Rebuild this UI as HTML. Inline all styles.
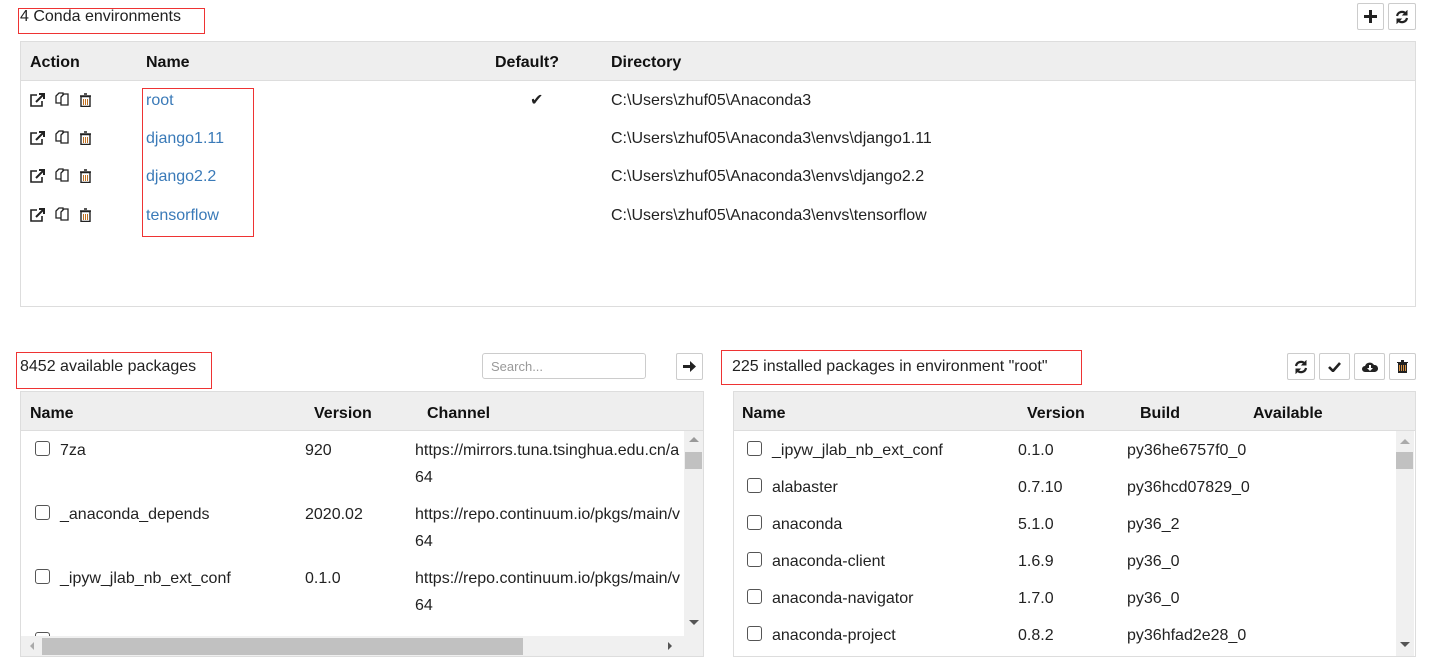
<!DOCTYPE html><html><head><style>
body{margin:0;width:1445px;height:664px;background:#fff;font-family:"Liberation Sans",Arial,sans-serif;font-size:16px;color:#222;position:relative;overflow:hidden}
.a{position:absolute;white-space:nowrap}
.t{margin-top:2px}
.red{position:absolute;border:1px solid #e33}
.box{position:absolute;border:1px solid #ddd;box-sizing:border-box;background:#fff}
.hd{position:absolute;left:0;right:0;top:0;height:38px;background:#eee;border-bottom:1px solid #ddd}
b{font-size:16px;color:#111}
.btn{position:absolute;border:1px solid #ccc;border-radius:2px;box-sizing:border-box;background:#fff;height:27px;display:flex;align-items:center;justify-content:center}
.cb{position:absolute;width:15px;height:15px;border:1px solid #555;border-radius:3px;box-sizing:border-box}
.lnk{color:#3a7ab8}
.sb{position:absolute;background:#f0f0f0}
</style></head><body>
<div class="red" style="left:18px;top:8px;width:185px;height:24px"></div>
<div class="a" style="left:20px;top:8px">4 Conda environments</div>
<div class="btn" style="left:1357px;top:3px;width:27px"><svg width="13" height="13"><path d="M5 0h3v5h5v3H8v5H5V8H0V5h5z" fill="#222"/></svg></div>
<div class="btn" style="left:1388px;top:3px;width:28px"><svg width="14" height="14" viewBox="0 0 14 14" fill="none" stroke="#222" stroke-width="2.2"><path d="M2 6a5 5 0 0 1 9-2"/><path d="M12 8a5 5 0 0 1-9 2"/><path d="M12 1v4H8z" fill="#222" stroke-width="1"/><path d="M2 13V9h4z" fill="#222" stroke-width="1"/></svg></div>
<div class="box" style="left:20px;top:41px;width:1396px;height:266px"><div class="hd"></div></div>
<div class="a t" style="left:30px;top:52px"><b>Action</b></div>
<div class="a t" style="left:146px;top:52px"><b>Name</b></div>
<div class="a t" style="left:495px;top:52px"><b>Default?</b></div>
<div class="a t" style="left:611px;top:52px"><b>Directory</b></div>
<div class="red" style="left:142px;top:88px;width:110px;height:147px"></div>
<div id="rows"></div>
<div class="a" style="left:530px;top:90px;font-size:16px">✔</div>

<div class="red" style="left:16px;top:352px;width:194px;height:35px"></div>
<div class="a" style="left:20px;top:358px">8452 available packages</div>
<div class="a" style="left:482px;top:353px;width:164px;height:26px;border:1px solid #ccc;border-radius:3px;box-sizing:border-box;font-size:13px;color:#999;padding:5px 8px">Search...</div>
<div class="btn" style="left:676px;top:353px;width:27px"><svg width="13" height="13"><path d="M0 5h7V1l6 5.5-6 5.5V8H0z" fill="#222"/></svg></div>
<div class="box" style="left:20px;top:391px;width:684px;height:266px"><div class="hd"></div></div>
<div class="a t" style="left:30px;top:403px"><b>Name</b></div>
<div class="a t" style="left:314px;top:403px"><b>Version</b></div>
<div class="a t" style="left:427px;top:403px"><b>Channel</b></div>
<div class="sb" style="left:684px;top:431px;width:19px;height:205px"></div>
<div class="a" style="left:689px;top:437px;width:0;height:0;border:5px solid transparent;border-bottom-color:#999;border-top:0"></div>
<div class="a" style="left:685px;top:452px;width:17px;height:17px;background:#c1c1c1"></div>
<div class="a" style="left:689px;top:620px;width:0;height:0;border:5px solid transparent;border-top-color:#555;border-bottom:0"></div>
<div class="sb" style="left:21px;top:636px;width:682px;height:20px"></div>
<div class="a" style="left:42px;top:638px;width:481px;height:17px;background:#c1c1c1"></div>
<div class="a" style="left:30px;top:642px;width:0;height:0;border:4px solid transparent;border-right-color:#aaa;border-left:0"></div>
<div class="a" style="left:668px;top:642px;width:0;height:0;border:4px solid transparent;border-left-color:#555;border-right:0"></div>

<div class="red" style="left:721px;top:350px;width:359px;height:33px"></div>
<div class="a" style="left:732px;top:358px">225 installed packages in environment "root"</div>
<div class="btn" style="left:1287px;top:353px;width:28px"><svg width="14" height="14" viewBox="0 0 14 14" fill="none" stroke="#222" stroke-width="2.2"><path d="M2 6a5 5 0 0 1 9-2"/><path d="M12 8a5 5 0 0 1-9 2"/><path d="M12 1v4H8z" fill="#222" stroke-width="1"/><path d="M2 13V9h4z" fill="#222" stroke-width="1"/></svg></div>
<div class="btn" style="left:1319px;top:353px;width:31px"><svg width="13" height="11"><path d="M1 6l4 4 7-8" stroke="#222" stroke-width="2.6" fill="none"/></svg></div>
<div class="btn" style="left:1354px;top:353px;width:31px"><svg width="16" height="12"><path d="M3 11a3 3 0 0 1 0-6 5 5 0 0 1 9-1 3.5 3.5 0 0 1 1 7z" fill="#222"/><path d="M7 4h2v3h2l-3 3-3-3h2z" fill="#fff"/></svg></div>
<div class="btn" style="left:1389px;top:353px;width:27px"><svg width="11" height="13"><path d="M0 2h11v1H0zM4 0h3v2H4zM1 3h9v10H1z" fill="#222"/><path d="M2.5 5v6M4.5 5v6M6.5 5v6M8.5 5v6" stroke="#d89040" stroke-width="1"/></svg></div>
<div class="box" style="left:733px;top:391px;width:683px;height:266px"><div class="hd"></div></div>
<div class="a t" style="left:742px;top:403px"><b>Name</b></div>
<div class="a t" style="left:1027px;top:403px"><b>Version</b></div>
<div class="a t" style="left:1140px;top:403px"><b>Build</b></div>
<div class="a t" style="left:1253px;top:403px"><b>Available</b></div>
<div class="sb" style="left:1396px;top:431px;width:18px;height:225px"></div>
<div class="a" style="left:1400px;top:439px;width:0;height:0;border:5px solid transparent;border-bottom-color:#aaa;border-top:0"></div>
<div class="a" style="left:1396px;top:452px;width:17px;height:17px;background:#c1c1c1"></div>
<div class="a" style="left:1400px;top:642px;width:0;height:0;border:5px solid transparent;border-top-color:#555;border-bottom:0"></div>

<div id="pk"></div>
<script>
var icons='<svg width="16" height="14" viewBox="0 0 16 14"><path d="M7 2H1v11h11V8" stroke="#222" stroke-width="1.6" fill="none"/><path d="M6 9l7-7M9 1h5v5" stroke="#222" stroke-width="2" fill="none"/></svg><svg style="margin-left:9px" width="16" height="16" viewBox="0 0 16 16" fill="#fff" stroke="#222" stroke-width="1.3"><path d="M1 5l3-3h4v10H1z"/><path d="M6 6l3-3h4v11H6z"/></svg><svg style="margin-left:8px" width="13" height="14" viewBox="0 0 13 14"><path d="M1 3h11M5 1h3" stroke="#222" stroke-width="1.6"/><path d="M2 3.5h9v10H2z" fill="none" stroke="#222" stroke-width="1.4"/><path d="M4.5 6v6M6.5 6v6M8.5 6v6" stroke="#c07020"/></svg>';
var env=[["root","C:\\Users\\zhuf05\\Anaconda3"],["django1.11","C:\\Users\\zhuf05\\Anaconda3\\envs\\django1.11"],["django2.2","C:\\Users\\zhuf05\\Anaconda3\\envs\\django2.2"],["tensorflow","C:\\Users\\zhuf05\\Anaconda3\\envs\\tensorflow"]];
var h='',ys=[92,130,168,207];
env.forEach(function(e,i){var y=ys[i];h+='<div class="a" style="left:30px;top:'+(y-1)+'px">'+icons+'</div><div class="a lnk" style="left:146px;top:'+y+'px">'+e[0]+'</div><div class="a" style="left:611px;top:'+y+'px">'+e[1]+'</div>';});
document.getElementById('rows').innerHTML=h;
var L=[["7za","920","https://mirrors.tuna.tsinghua.edu.cn/a"],["_anaconda_depends","2020.02","https://repo.continuum.io/pkgs/main/v"],["_ipyw_jlab_nb_ext_conf","0.1.0","https://repo.continuum.io/pkgs/main/v"]];
var p='';
L.forEach(function(r,i){var y=442+i*64;p+='<div class="cb" style="left:35px;top:'+(y-1)+'px"></div><div class="a" style="left:60px;top:'+y+'px">'+r[0]+'</div><div class="a" style="left:305px;top:'+y+'px">'+r[1]+'</div><div class="a" style="left:415px;top:'+y+'px;width:269px;overflow:hidden">'+r[2]+'</div><div class="a" style="left:415px;top:'+(y+27)+'px">64</div>';});
p+='<div class="a" style="left:35px;top:632px;width:15px;height:4px;border:1px solid #555;border-bottom:0;border-radius:3px 3px 0 0;box-sizing:border-box"></div>';
var R=[["_ipyw_jlab_nb_ext_conf","0.1.0","py36he6757f0_0"],["alabaster","0.7.10","py36hcd07829_0"],["anaconda","5.1.0","py36_2"],["anaconda-client","1.6.9","py36_0"],["anaconda-navigator","1.7.0","py36_0"],["anaconda-project","0.8.2","py36hfad2e28_0"]];
R.forEach(function(r,i){var y=442+i*37;p+='<div class="cb" style="left:747px;top:'+(y-1)+'px"></div><div class="a" style="left:772px;top:'+y+'px">'+r[0]+'</div><div class="a" style="left:1018px;top:'+y+'px">'+r[1]+'</div><div class="a" style="left:1127px;top:'+y+'px">'+r[2]+'</div>';});
document.getElementById('pk').innerHTML=p;
</script>
</body></html>
